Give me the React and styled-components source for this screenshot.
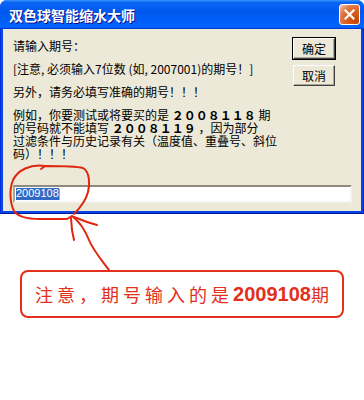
import styled, { createGlobalStyle } from "styled-components";

const GlobalStyle = createGlobalStyle`
  html, body { margin: 0; padding: 0; background: #fff; }
  body { font-family: "Noto Sans CJK SC", "Liberation Sans", sans-serif; }
`

const Page = styled.div`
  position: relative;
  width: 364px;
  height: 400px;
  overflow: hidden;
  background: #fff;
`
const Frame = styled.div`
  width: 364px;
  height: 214px;
  box-sizing: border-box;
  display: flex;
  flex-direction: column;
  padding: 0 3px 3px 3px;
  border-radius: 7px 7px 0 0;
  background: linear-gradient(to right, #0019cf 0, #0a46e6 1px, #0842e0 calc(100% - 1px), #001a9e 100%);
  box-shadow: inset 0 -1px 0 #001a9e;
`
const TitleBar = styled.div`
  height: 29px;
  margin: 0 -3px;
  padding: 0 3px 0 9px;
  display: flex;
  align-items: center;
  justify-content: space-between;
  border-radius: 7px 7px 0 0;
  background: linear-gradient(to bottom, #3d95ff 0%, #0a66f5 8%, #0058ee 40%, #0062fc 85%, #0066ff 92%, #005bff 95%, #003dd7 97%, #003dd7 100%);
`
const Title = styled.span`
  color: #fff;
  font-size: 14px;
  font-weight: 700;
  text-shadow: 1px 1px 0 #0f1089;
`
const CloseButton = styled.div`
  width: 21px;
  height: 21px;
  box-sizing: border-box;
  margin-right: 1px;
  border: 1px solid #fff;
  border-radius: 3px;
  display: flex;
  align-items: center;
  justify-content: center;
  background: radial-gradient(circle at 85% 85%, #c84300 0%, #dc6527 50%, #e3794a 70%, #f4b79a 92%, #ffd9c6 100%);
`
const Body = styled.div`
  flex: 1;
  display: flex;
  flex-direction: column;
  background: #ece9d8;
  padding: 10px 9px 8px 10px;
`
const TopRow = styled.div`
  flex: 1;
  display: flex;
  justify-content: space-between;
`
const TextCol = styled.div`
  display: flex;
  flex-direction: column;
  gap: 10px;
  font-size: 12px;
  line-height: 13px;
  color: #000;
  white-space: nowrap;
`
const Line = styled.div``
const Big = styled.span`
  font-weight: 700;
`
const ButtonCol = styled.div`
  display: flex;
  flex-direction: column;
  gap: 6px;
  margin: -1px 17px 0 0;
`
const Button = styled.div`
  width: 42px;
  height: 21px;
  box-sizing: border-box;
  display: flex;
  align-items: center;
  justify-content: center;
  font-size: 12px;
  color: #000;
  background: #ece9d8;
  border: 1px solid;
  border-color: #fff #404040 #404040 #fff;
  box-shadow: inset -1px -1px 0 #aca899;
  outline: ${p => (p.$default ? "1px solid #000" : "none")};
`
const Field = styled.div`
  height: 18px;
  box-sizing: border-box;
  border: 2px solid;
  border-color: #8d8b80 #f4f3ee #f4f3ee #a9a79c;
  background: #fff;
  display: flex;
  align-items: center;
  padding-left: 1px;
`
const Selected = styled.span`
  font-family: "Liberation Sans", sans-serif;
  font-size: 11px;
  line-height: 11px;
  color: #fff;
  background: #316ac5;
  padding: 0 0 1px 0;
`
const Caret = styled.span`
  width: 1px;
  height: 11px;
  background: #e0a040;
`
const Callout = styled.div`
  width: 324px;
  height: 48px;
  box-sizing: border-box;
  margin: 56px 0 0 20px;
  border: 2px solid #e2301c;
  border-radius: 8px;
  display: flex;
  align-items: center;
  justify-content: center;
  color: #e2301c;
  font-size: 18px;
`
const CalloutText = styled.span`
  letter-spacing: ${p => p.$spaced ? "4px" : "0"};
`
const CalloutNum = styled.span`
  font-family: "Liberation Sans", sans-serif;
  font-weight: 700;
  font-size: 20px;
`
const Scribble = styled.svg`
  position: absolute;
  left: 0;
  top: 0;
  pointer-events: none;
`

const App = () => {
  return (
    <Page>
      <GlobalStyle />
      <Frame>
        <TitleBar>
          <Title>双色球智能缩水大师</Title>
          <CloseButton>
            <svg width="11" height="11" viewBox="0 0 11 11">
              <path d="M1.5 1.5 L9.5 9.5 M9.5 1.5 L1.5 9.5" stroke="#fff" strokeWidth="2.2" strokeLinecap="square" />
            </svg>
          </CloseButton>
        </TitleBar>
        <Body>
          <TopRow>
            <TextCol>
              <Line>请输入期号：</Line>
              <Line>[注意, 必须输入7位数 (如, 2007001)的期号！]</Line>
              <Line>另外，请务必填写准确的期号！！！</Line>
              <Line>
                例如，你要测试或将要买的是 <Big>２００８１１８</Big> 期<br />
                的号码就不能填写 <Big>２００８１１９</Big> ，因为部分<br />
                过滤条件与历史记录有关（温度值、重叠号、斜位<br />
                码）！！！
              </Line>
            </TextCol>
            <ButtonCol>
              <Button $default>确定</Button>
              <Button>取消</Button>
            </ButtonCol>
          </TopRow>
          <Field>
            <Selected>2009108</Selected>
            <Caret />
          </Field>
        </Body>
      </Frame>
      <Callout>
        <CalloutText $spaced>注意，期号输入的是</CalloutText>
        <CalloutNum>2009108</CalloutNum>
        <CalloutText>期</CalloutText>
      </Callout>
      <Scribble width="364" height="400" viewBox="0 0 364 400">
        <g fill="none" stroke="#e0260e" strokeWidth="2" strokeLinejoin="round" strokeLinecap="round">
          <path d="M41 169 L45 166 C60 166 75 166 83 168 C90 172 90 185 88 192 C86 200 80 208 74 214" />
          <path d="M45 166 C30 164 18 170 13 180 C9 190 10 203 14 211 C18 217 28 219 40 219 L67 219 L72 216" />
          <path d="M72 216 C80 222 85 230 89 240 C93 250 100 258 109 270" />
          <path d="M71 218 L72 230 L74 240" />
          <path d="M74 217 L87 222 L97 225" />
        </g>
      </Scribble>
    </Page>
  );
}
export default App;
